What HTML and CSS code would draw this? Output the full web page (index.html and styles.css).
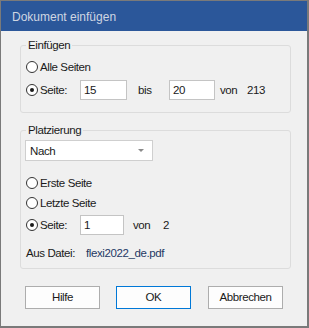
FILE: index.html
```html
<!DOCTYPE html>
<html lang="de">
<head>
    <meta charset="UTF-8">
    <title>Dokument einfügen</title>
    <link rel="stylesheet" href="styles.css">
</head>
<body>
    <div class="dialog">
        <div class="titlebar">Dokument einfügen</div>
        <div class="content">
            <fieldset class="group group-insert">
                <legend>Einfügen</legend>
                <div class="row">
                    <label class="radio"><span class="dot"></span>Alle Seiten</label>
                </div>
                <div class="row row-pages">
                    <label class="radio wide checked"><span class="dot"></span>Seite:</label>
                    <div class="textbox tb-from">15</div>
                    <span class="word w-bis">bis</span>
                    <div class="textbox tb-to">20</div>
                    <span class="word w-von">von</span>
                    <span>213</span>
                </div>
            </fieldset>

            <fieldset class="group group-place">
                <legend>Platzierung</legend>
                <div class="select">
                    <span>Nach</span>
                    <span class="caret"></span>
                </div>
                <div class="row row-first">
                    <label class="radio"><span class="dot"></span>Erste Seite</label>
                </div>
                <div class="row">
                    <label class="radio"><span class="dot"></span>Letzte Seite</label>
                </div>
                <div class="row row-page">
                    <label class="radio wide checked"><span class="dot"></span>Seite:</label>
                    <div class="textbox tb-page">1</div>
                    <span class="word w-von2">von</span>
                    <span>2</span>
                </div>
                <div class="row row-file">
                    <span class="word w-file">Aus Datei:</span>
                    <span class="filename">flexi2022_de.pdf</span>
                </div>
            </fieldset>

            <div class="buttons">
                <div class="btn">Hilfe</div>
                <div class="btn btn-default">OK</div>
                <div class="btn btn-last">Abbrechen</div>
            </div>
        </div>
    </div>
</body>
</html>
```

FILE: styles.css
```css
body{
    margin:0;
    font-family:"Liberation Sans", Arial, sans-serif;
    font-size:11.5px;
    letter-spacing:-0.4px;
    color:#1a1a1a;
}
.dialog{
    box-sizing:border-box;
    display:flex;
    flex-direction:column;
    width:309px;
    height:328px;
    border:1px solid #7a7a7a;
    border-right-width:2px;
    border-bottom-width:2px;
    background-color:#f0f0f0;
}
.titlebar{
    box-sizing:border-box;
    height:30px;
    padding:3px 0 0 11px;
    background-color:#2b579a;
    color:#cfd6e2;
    font-size:12px;
    letter-spacing:0;
    line-height:27px;
}
.content{
    flex:1;
    display:flex;
    flex-direction:column;
    align-items:flex-start;
    padding:7px 0 0 19px;
}
.group{
    box-sizing:border-box;
    width:271px;
    margin:0;
    border:1px solid #dcdcdc;
    border-radius:3px;
    padding:5px 0 12px 5px;
}
.group legend{
    padding:0 2px;
    line-height:14px;
}
.group-place{
    margin-top:10px;
    padding:3px 0 5px 5px;
}
.row{
    display:flex;
    align-items:center;
    height:20px;
}
.row-pages{
    margin-top:3px;
}
.row-first{
    margin-top:12px;
}
.row-page{
    margin-top:2px;
}
.row-file{
    margin-top:8px;
}
.radio{
    display:flex;
    align-items:center;
}
.radio.wide{
    width:54px;
}
.dot{
    box-sizing:border-box;
    position:relative;
    width:12px;
    height:12px;
    margin-right:2px;
    border:1px solid #333;
    border-radius:50%;
    background-color:#fff;
}
.radio.checked .dot::after{
    content:"";
    position:absolute;
    left:3px;
    top:3px;
    width:4px;
    height:4px;
    border-radius:50%;
    background-color:#1a1a1a;
}
.textbox{
    box-sizing:border-box;
    height:20px;
    padding-left:3px;
    border:1px solid #c4c4c4;
    background-color:#fff;
    line-height:18px;
}
.tb-from{
    width:47px;
    margin-right:11px;
}
.w-bis{
    width:31px;
}
.tb-to{
    width:46px;
    margin-right:5px;
}
.w-von{
    width:27px;
}
.tb-page{
    width:44px;
    margin-right:9px;
}
.w-von2{
    width:30px;
}
.w-file{
    width:60px;
}
.filename{
    color:#1f3864;
}
.select{
    box-sizing:border-box;
    display:flex;
    align-items:center;
    justify-content:space-between;
    width:128px;
    height:21px;
    margin-left:-1px;
    padding:0 8px 0 4px;
    border:1px solid #cfcfcf;
    background-color:#fff;
}
.caret{
    width:0;
    height:0;
    border-left:3px solid transparent;
    border-right:3px solid transparent;
    border-top:3px solid #8a8a8a;
}
.buttons{
    display:flex;
    gap:16px;
    margin:17px 0 0 5px;
}
.btn{
    box-sizing:border-box;
    width:75px;
    height:23px;
    border:1px solid #adadad;
    background-color:#fdfdfd;
    text-align:center;
    line-height:21px;
}
.btn-default{
    border-color:#0078d7;
}
.btn-last{
    margin-left:1px;
}
```
